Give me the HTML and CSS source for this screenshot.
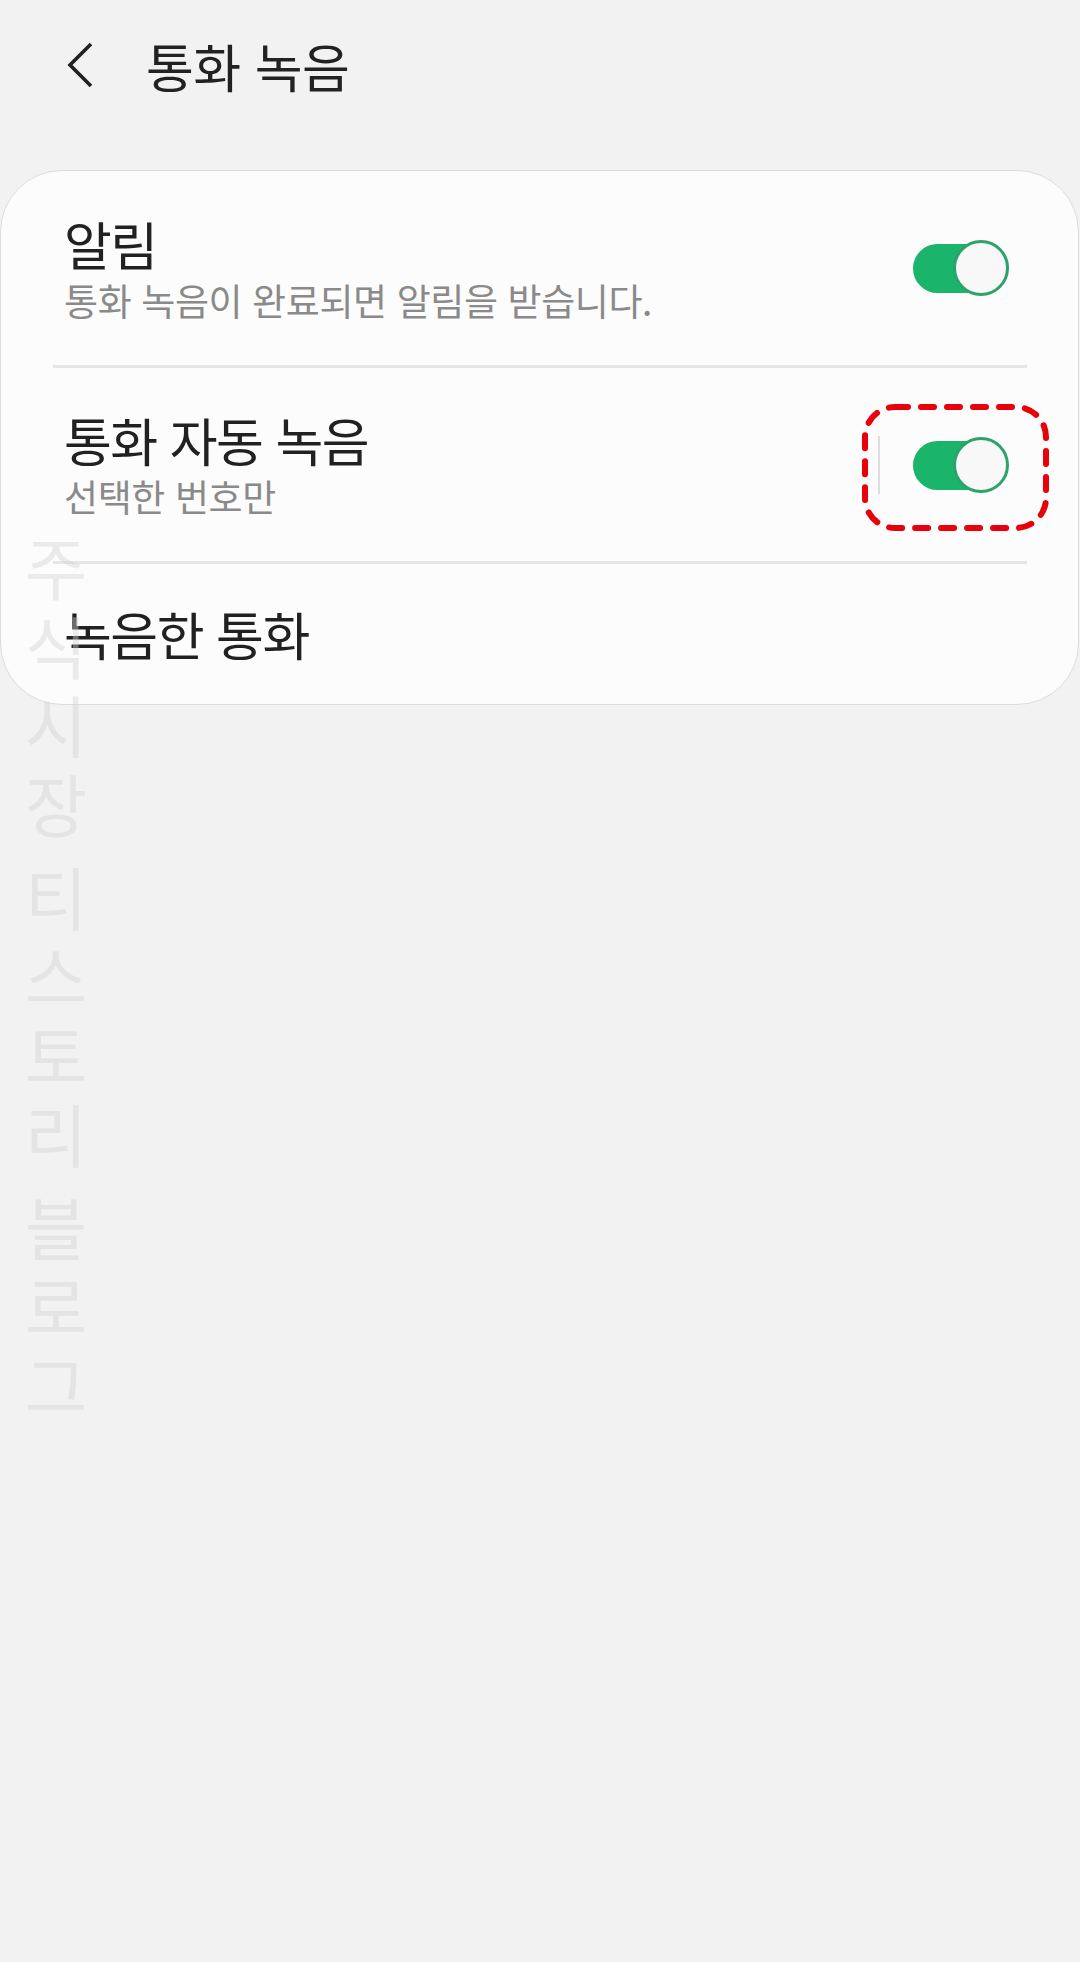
FILE: index.html
```html
<!DOCTYPE html>
<html lang="ko">
<head>
<meta charset="utf-8">
<title>통화 녹음</title>
<link rel="stylesheet" href="styles.css">
</head>
<body>
<div class="screen">
  <header class="appbar">
    <button class="back" aria-label="뒤로">
      <svg width="30" height="48" viewBox="0 0 30 48"><path d="M25 2 L4 23 L25 44" fill="none" stroke="#222" stroke-width="3.6" stroke-linecap="butt" stroke-linejoin="miter"/></svg>
    </button>
    <h1 class="title">통화 녹음</h1>
  </header>

  <section class="card">
    <div class="row row-tall">
      <div class="texts">
        <div class="label">알림</div>
        <div class="sub sub-long">통화 녹음이 완료되면 알림을 받습니다.</div>
      </div>
      <div class="switch-area">
        <div class="switch"><span class="track"></span><span class="knob"></span></div>
      </div>
    </div>
    <div class="row row-tall">
      <div class="texts">
        <div class="label">통화 자동 녹음</div>
        <div class="sub">선택한 번호만</div>
      </div>
      <div class="switch-area">
        <span class="vline"></span>
        <div class="switch"><span class="track"></span><span class="knob"></span></div>
        <svg class="mark" width="190" height="130" viewBox="0 0 190 130"><rect x="4" y="4" width="181" height="121" rx="30" ry="30" fill="none" stroke="#e8000b" stroke-width="6" stroke-dasharray="13 13" stroke-linecap="round"/></svg>
      </div>
    </div>
    <div class="row row-last">
      <div class="texts">
        <div class="label">녹음한 통화</div>
      </div>
    </div>
  </section>

  <div class="watermark" aria-hidden="true">
    <span>주</span><span>식</span><span>시</span><span>장</span><i></i>
    <span>티</span><span>스</span><span>토</span><span>리</span><i></i>
    <span>블</span><span>로</span><span>그</span>
  </div>
</div>
</body>
</html>
```

FILE: styles.css
```css
html, body {
  margin: 0;
  padding: 0;
}
body {
  background: #f2f2f2;
  font-family: "Noto Sans CJK KR", "Noto Sans", sans-serif;
  color: #222;
}
.screen {
  position: relative;
  width: 1080px;
  height: 1962px;
  overflow: hidden;
}
.appbar {
  height: 132px;
  display: flex;
  align-items: center;
  padding-left: 66px;
  box-sizing: border-box;
}
.back {
  border: 0;
  background: none;
  padding: 0;
  width: 30px;
  height: 48px;
  display: flex;
  margin-top: -1px;
}
.title {
  margin: 0 0 0 50px;
  font-size: 52px;
  font-weight: 400;
  letter-spacing: -0.5px;
  line-height: 60px;
  color: #222;
}
.card {
  margin: 38px 1px 0 0;
  background: #fcfcfc;
  border: 1px solid #dcdcdc;
  border-radius: 62px;
  padding: 0 51px 0 52px;
}
.row {
  display: flex;
  align-items: center;
  justify-content: space-between;
  padding-left: 11px;
  padding-right: 18px;
  box-sizing: border-box;
}
.row-tall {
  height: 197px;
  border-bottom: 3px solid #e6e6e6;
}
.row-tall + .row-tall {
  height: 196px;
}
.row-last {
  height: 140px;
}
.texts {
  display: flex;
  flex-direction: column;
}
.label {
  font-size: 52px;
  line-height: 60px;
  letter-spacing: -1.5px;
  color: #212121;
}
.sub {
  font-size: 37px;
  line-height: 46px;
  letter-spacing: -0.4px;
  color: #8a8a8a;
  margin-top: 3px;
}
.switch-area {
  position: relative;
  display: flex;
  align-items: center;
  gap: 33px;
}
.vline {
  width: 2px;
  height: 58px;
  background: #dedede;
}
.switch {
  position: relative;
  width: 96px;
  height: 56px;
}
.track {
  position: absolute;
  left: 0;
  top: 4px;
  width: 84px;
  height: 49px;
  border-radius: 25px;
  background: #1bb46b;
}
.knob {
  position: absolute;
  right: 0;
  top: 0;
  width: 56px;
  height: 56px;
  box-sizing: border-box;
  border: 3px solid #2ba36a;
  border-radius: 50%;
  background: #f8f8f8;
}
.mark {
  position: absolute;
  left: -17px;
  top: -33px;
}
.watermark {
  position: absolute;
  left: 22px;
  top: 526px;
  width: 68px;
  display: flex;
  flex-direction: column;
  align-items: center;
  font-size: 68px;
  line-height: 79px;
  color: rgba(210, 210, 210, 0.42);
  pointer-events: none;
}
.watermark span {
  display: block;
  height: 79px;
}
.watermark i {
  display: block;
  height: 14px;
}
```
